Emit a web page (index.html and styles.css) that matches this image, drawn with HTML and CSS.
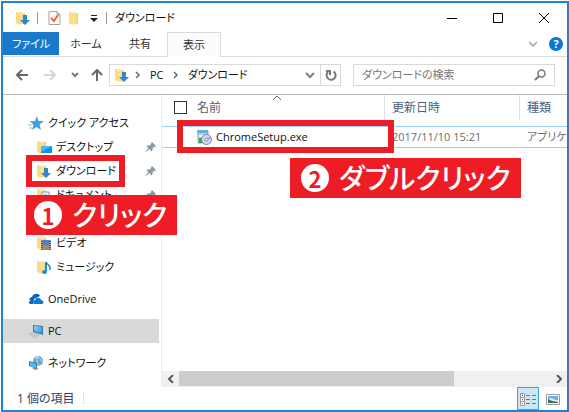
FILE: index.html
```html
<!DOCTYPE html>
<html lang="ja">
<head>
<meta charset="utf-8">
<title>ダウンロード</title>
<meta name="viewport" content="width=device-width">
<link rel="stylesheet" href="styles.css">
</head>
<body>
<svg class="defs" aria-hidden="true">
  <defs>
    <linearGradient id="gold" x1="0" x2="1"><stop offset="0" stop-color="#ffe69e"/><stop offset="1" stop-color="#f5cf69"/></linearGradient>
    <linearGradient id="sky" x1="0" y1="0" x2="1" y2="1"><stop offset="0" stop-color="#8fd8fa"/><stop offset="1" stop-color="#2093dd"/></linearGradient>
    <symbol id="folder" viewBox="0 0 16 16">
      <path d="M1 2h7v1h2v10H8v2L1 13z" fill="#ffe9a9"/>
      <path d="M5 4l5-1v11H5z" fill="url(#gold)"/>
      <path d="M1 2l4 2v11l-4-2z" fill="#fbdc86"/>
    </symbol>
    <symbol id="download" viewBox="0 0 16 16">
      <use href="#folder" width="16" height="16"/>
      <path d="M8 5h4v5h3l-5 5-5-5h3z" fill="#3385d0"/>
    </symbol>
    <symbol id="pin" viewBox="0 0 12 12">
      <path d="M7 1l4 4-1 1-1-.3L7.500 7.500 7.500 9.500 6.500 10.500 4.500 8 1 11 .5 10.700 3.500 7 1.500 5.500 2.500 4.500 4.500 4.500 6.300 3 6 2z" fill="#8c9aa5"/>
    </symbol>
  </defs>
</svg>
<div class="window">
  <header class="titlebar">
    <svg class="icon" viewBox="0 0 16 16"><use href="#download"/></svg>
    <span class="sep"></span>
    <button class="tool" aria-label="プロパティ"><svg class="icon" viewBox="0 0 16 16"><path d="M3 1.500h8l3 3v10H3z" fill="#fdfdfd" stroke="#a3a3a3"/><path d="M11 1.500v3h3" fill="none" stroke="#a3a3a3"/><path d="M5 8l3 3 4-6" fill="none" stroke="#e8663c" stroke-width="2"/></svg></button>
    <button class="tool" aria-label="新しいフォルダー"><svg class="icon" viewBox="0 0 16 16"><use href="#folder"/></svg></button>
    <button class="tool" aria-label="カスタマイズ"><svg class="small" viewBox="0 0 8 8"><path d="M1 1.500h6" stroke="#222"/><path d="M0 4h8L4 8z" fill="#222"/></svg></button>
    <span class="sep"></span>
    <h1>ダウンロード</h1>
    <div class="caption">
      <button aria-label="最小化"><svg viewBox="0 0 12 12"><path d="M1 6.500h10" stroke="#000"/></svg></button>
      <button aria-label="最大化"><svg viewBox="0 0 12 12"><path d="M1.500 1.500h9v9h-9z" fill="none" stroke="#000"/></svg></button>
      <button aria-label="閉じる"><svg viewBox="0 0 12 12"><path d="M1 1l10 10M11 1L1 11" stroke="#000"/></svg></button>
    </div>
  </header>
  <nav class="tabs">
    <button class="file">ファイル</button>
    <button>ホーム</button>
    <button>共有</button>
    <button class="current">表示</button>
    <div class="tabs-end">
      <button aria-label="リボンの展開"><svg class="small" viewBox="0 0 8 8"><path d="M0 2l4 4 4-4" fill="none" stroke="#a0a0a0" stroke-width="1.500"/></svg></button>
      <button class="help" aria-label="ヘルプ">?</button>
    </div>
  </nav>
  <div class="address-row">
    <div class="arrows">
      <button aria-label="戻る"><svg viewBox="0 0 12 12"><path d="M12 6H1M6 1L1 6l5 5" fill="none" stroke="#686868" stroke-width="2"/></svg></button>
      <button aria-label="進む"><svg viewBox="0 0 12 12"><path d="M0 6h11M6 1l5 5-5 5" fill="none" stroke="#d6d6d6" stroke-width="2"/></svg></button>
      <button class="history" aria-label="最近の場所"><svg class="small" viewBox="0 0 8 8"><path d="M1 2l3 3 3-3" fill="none" stroke="#7c7c7c" stroke-width="2"/></svg></button>
      <button aria-label="上へ"><svg viewBox="0 0 12 12"><path d="M6 12V1M1 6l5-5 5 5" fill="none" stroke="#686868" stroke-width="2"/></svg></button>
    </div>
    <div class="address">
      <svg class="icon" viewBox="0 0 16 16"><use href="#download"/></svg>
      <svg class="small" viewBox="0 0 8 8"><path d="M2 1l3 3-3 3" fill="none" stroke="#6b6b6b" stroke-width="1.500"/></svg>
      <button>PC</button>
      <svg class="small" viewBox="0 0 8 8"><path d="M2 1l3 3-3 3" fill="none" stroke="#6b6b6b" stroke-width="1.500"/></svg>
      <button>ダウンロード</button>
      <button class="drop" aria-label="以前の場所"><svg viewBox="0 0 12 12"><path d="M2 4l4 4 4-4" fill="none" stroke="#808080" stroke-width="2"/></svg></button>
      <button class="refresh" aria-label="更新"><svg viewBox="0 0 12 12"><path d="M8.500 2.500A4.500 4.500 0 1 1 3 3" fill="none" stroke="#777" stroke-width="2"/><path d="M1 1h5v5H4V3H1z" fill="#777"/></svg></button>
    </div>
    <label class="search">
      <input type="search" placeholder="ダウンロードの検索" aria-label="ダウンロードの検索">
      <svg viewBox="0 0 12 12"><circle cx="7.500" cy="4.500" r="3.500" fill="none" stroke="#777" stroke-width="1.500"/><path d="M5 7l-4 4" stroke="#777" stroke-width="2"/></svg>
    </label>
  </div>
  <main>
    <nav class="tree">
      <a href="#quick"><svg class="icon" viewBox="0 0 16 16"><path d="M9 1l1.500 5H16l-4.500 3.500L13 15l-4.500-3L4 15l1.500-5L2 6h5z" fill="#3ba1e4"/><path d="M0 10h4M1 13h3M2 7h3" stroke="#75c4f2"/></svg>クイック アクセス</a>
      <a class="child" href="#desktop"><svg class="icon" viewBox="0 0 16 16"><use href="#folder"/><path d="M5 7h11v7H5z" fill="#1593e0"/><path d="M5 7h11L5 13z" fill="#4cb9f2"/></svg>デスクトップ<svg class="pin" viewBox="0 0 12 12"><use href="#pin"/></svg></a>
      <div class="target">
        <a class="child" href="#downloads"><svg class="icon" viewBox="0 0 16 16"><use href="#download"/></svg>ダウンロード<svg class="pin" viewBox="0 0 12 12"><use href="#pin"/></svg></a>
        <div class="ring"></div>
        <div class="step"><b>1</b>クリック</div>
      </div>
      <a class="child" href="#documents"><svg class="icon" viewBox="0 0 16 16"><use href="#folder"/><path d="M6 5h7v9H6z" fill="#f4f7fa" stroke="#8497a8"/><path d="M8 8h3M8 10h3" stroke="#539bd0"/></svg>ドキュメント<svg class="pin" viewBox="0 0 12 12"><use href="#pin"/></svg></a>
      <a class="child" href="#pictures" aria-label="ピクチャ"><svg class="icon" viewBox="0 0 16 16"><use href="#folder"/></svg></a>
      <a class="child" href="#videos"><svg class="icon" viewBox="0 0 16 16"><use href="#folder"/><path d="M5 5h10v10H5z" fill="#555b61"/><path d="M7 5h6v5H7z" fill="#517bd0"/><path d="M7 10h6v5H7z" fill="#a88d45"/><path d="M6 5v10M14 5v10" stroke="#ddd" stroke-dasharray="1 1"/></svg>ビデオ</a>
      <a class="child" href="#music"><svg class="icon" viewBox="0 0 16 16"><use href="#folder"/><path d="M10 3v9" stroke="#168de0" stroke-width="2"/><ellipse cx="8.500" cy="13" rx="2.500" ry="2" fill="#168de0"/><path d="M10 3c1 3 5 3 4 8" fill="none" stroke="#168de0" stroke-width="1.500"/></svg>ミュージック</a>
      <a class="root" href="#onedrive"><svg class="icon" viewBox="0 0 16 16"><path d="M3 10C0 9 2 6 4 6c1-4 7-4 8-1L6 8l-1 5H3c-3 0-3-3 0-3z" fill="#0d61b8"/><path d="M7 13c-3 0-2-4 0-4 1-3 5-3 6 0 3 0 3 4 1 4z" fill="#0f77d4"/></svg>OneDrive</a>
      <a class="root selected" href="#pc"><svg class="icon" viewBox="0 0 16 16"><path d="M5 2l10 1v9L5 9z" fill="#427294"/><path d="M6 3l8 1v7L6 8z" fill="url(#sky)"/><path d="M0 11l5-2 7 3-5 3z" fill="#acb8c0"/><path d="M2 11l6 3M4 10l6 3" stroke="#fff" stroke-width=".5"/></svg>PC</a>
      <a class="root" href="#network"><svg class="icon" viewBox="0 0 16 16"><circle cx="10" cy="6" r="5" fill="#71a8c6"/><path d="M7 3c3-2 5 0 7 4M10 1c-2 3-1 7 1 10" fill="none" stroke="#c5e5ee"/><path d="M1 6l8 2v6l-8-3z" fill="#397eaa"/><path d="M2 7l6 2v4l-6-2z" fill="#49bdf1"/><path d="M4 13l3 2 4-1-4-2z" fill="#8597a1"/></svg>ネットワーク</a>
    </nav>
    <section class="pane">
      <table>
        <colgroup><col class="c-name"><col class="c-date"><col></colgroup>
        <thead><tr>
          <th><label><input type="checkbox">名前</label><svg class="sort" viewBox="0 0 8 4"><path d="M0 4l4-4 4 4" fill="none" stroke="#666"/></svg></th>
          <th>更新日時</th><th>種類</th>
        </tr></thead>
        <tbody>
          <tr class="spacer"><td colspan="3"></td></tr>
          <tr class="row">
            <td><span class="name"><svg class="icon" viewBox="0 0 16 16"><path d="M2 2h10v12H2z" fill="#b9cbdf" stroke="#8ea1b8"/><path d="M1 1h11v3H1z" fill="#5cb3dc"/><path d="M3 6h5v2H3z" fill="#eef5fb"/><path d="M3 9h4v5H3z" fill="#35a248"/><circle cx="10.500" cy="10.500" r="5" fill="#d3d8ee" stroke="#8085ae"/><path d="M10.500 10.500L14 7a5 5 0 0 1 1 3z" fill="#a8a5e0"/><circle cx="10.500" cy="10.500" r="1.500" fill="#fff" stroke="#777cac"/></svg>ChromeSetup.exe</span></td>
            <td>2017/11/10 15:21</td><td>アプリケー</td>
          </tr>
        </tbody>
      </table>
      <div class="ring"></div>
      <div class="step"><b>2</b>ダブルクリック</div>
      <div class="scroll">
        <button aria-label="左へ"><svg class="small" viewBox="0 0 8 8"><path d="M6 0L2 4l4 4" fill="none" stroke="#555" stroke-width="2"/></svg></button>
        <div class="track"><div class="thumb"></div></div>
        <button aria-label="右へ"><svg class="small" viewBox="0 0 8 8"><path d="M2 0l4 4-4 4" fill="none" stroke="#555" stroke-width="2"/></svg></button>
      </div>
    </section>
  </main>
  <footer>
    <span>1 個の項目</span><span class="divider"></span>
    <button class="view on" aria-label="詳細"><svg viewBox="0 0 16 14"><path d="M.5 1.500h4v4h-4zM.5 5.500h4v4h-4zM.5 9.500h4v4h-4z" fill="#fff" stroke="#999"/><path d="M2 3.500h1" stroke="#444"/><path d="M2 7.500h1" stroke="#1683e8"/><path d="M2 11.500h1" stroke="#d22"/><path d="M6 3.500h4M12 3.500h4M6 7.500h4M12 7.500h4M6 11.500h4M12 11.500h4" stroke="#777"/></svg></button>
    <button class="view" aria-label="大アイコン"><svg viewBox="0 0 16 14"><path d="M1.500 2.500h13v10h-13z" fill="#fff" stroke="#999"/><path d="M3 4h10v7H3z" fill="#6aaef2"/><path d="M3 7l4-1 3 2h3v3H3z" fill="#d5eafa"/><path d="M3 7l4 2 6 1v1H3z" fill="#3c6e5a"/></svg></button>
  </footer>
</div>
</body>
</html>
```
FILE: styles.css
```css
* { box-sizing: border-box; }

body {
  margin: 0;
  padding: 1px 0 0 1px;
  height: 100vh;
  background: #fff;
  color: #111;
  font: 11px/20px "Open Sans", "Noto Sans CJK JP", sans-serif;
  font-feature-settings: "palt";
}

button, input {
  margin: 0;
  padding: 0;
  border: 0;
  background: none;
  color: inherit;
  font: inherit;
  font-feature-settings: inherit;
}

a { color: inherit; text-decoration: none; }
svg { display: block; flex: none; width: 12px; height: 12px; }
.icon { width: 16px; height: 16px; }
.small { width: 8px; height: 8px; }
.defs { position: absolute; width: 0; height: 0; }

.window {
  display: flex;
  flex-direction: column;
  height: 100%;
  border: 2px solid #1c83d6;
  overflow: hidden;
}

/* title bar */
.titlebar {
  display: flex;
  align-items: center;
  height: 29px;
  padding-left: 12px;
}
.titlebar h1 { margin: 0; font-size: 11px; font-weight: 400; }
.sep { width: 1px; height: 12px; margin: 0 8px 0 6px; background: #999; }
.tool { margin-right: 6px; }
.tool + .sep { margin-left: 2px; }
.caption { display: flex; margin-left: auto; }
.caption button { display: grid; place-items: center; width: 46px; height: 29px; }

/* ribbon tabs */
.tabs { display: flex; height: 25px; border-bottom: 1px solid #dadbdc; color: #333; }
.tabs > button { width: 54px; }
.tabs > .file { width: 56px; height: 23px; background: #1979ca; color: #fff; }
.tabs > .current { height: 25px; border: 1px solid #dadbdc; border-bottom: 0; background: #fcfcfe; }
.tabs-end { display: flex; align-items: center; gap: 12px; margin-left: auto; padding-right: 4px; }
.help {
  width: 14px;
  height: 14px;
  border-radius: 50%;
  background: #0878d4;
  color: #fff;
  font-weight: 700;
  line-height: 14px;
}

/* navigation and address */
.address-row {
  display: flex;
  align-items: center;
  gap: 12px;
  height: 38px;
  padding: 0 12px 2px 13px;
  border-bottom: 1px solid #b8b8b8;
}
.arrows { display: flex; align-items: center; gap: 16px; width: 81px; }
.arrows .history { margin: 0 -4px 0 -1px; }
.address, .search { display: flex; align-items: center; height: 22px; border: 1px solid #d9d9d9; }
.address { flex: 226; gap: 8px; padding-left: 4px; }
.address .icon { margin-right: -4px; }
.address .drop { margin-left: auto; }
.refresh { display: grid; place-items: center; width: 20px; height: 20px; margin-left: -4px; border-left: 1px solid #d9d9d9; }
.search { flex: 184; padding: 0 8px; }
.search input { flex: 1; min-width: 0; outline: 0; appearance: none; }
.search input::placeholder { color: #757575; opacity: 1; }

/* folder tree */
main { display: flex; flex: 1; min-height: 0; }
.tree { width: 159px; padding-top: 16px; border-right: 1px solid #efefef; }
.tree a { display: flex; align-items: center; gap: 4px; height: 24px; padding-left: 25px; }
.tree .child { gap: 4px; padding-left: 33px; }
.tree .root { margin-top: 8px; }
.tree .selected { margin-right: 2px; background: #d9d9d9; }
.tree .pin { margin: 0 4px 0 auto; }

/* file list */
.pane { position: relative; display: flex; flex: 1; flex-direction: column; min-width: 0; }
table { width: 100%; table-layout: fixed; border-collapse: separate; border-spacing: 0; }
.c-name { width: 223px; }
.c-date { width: 135px; }
th, td { padding: 0 0 0 7px; overflow: hidden; text-align: left; white-space: nowrap; }
td:last-child { padding-right: 0; }
th { position: relative; height: 25px; border-right: 1px solid #e2e2e2; color: #4c607a; font-size: 12px; font-weight: 400; }
th:first-child { padding-left: 12px; }
th:last-child { border-right: 0; }
th label { display: flex; align-items: center; gap: 10px; }
th input { appearance: none; width: 13px; height: 13px; border: 1px solid #333; background: #fff; }
.sort { position: absolute; top: 1px; left: 50%; width: 8px; height: 4px; }
.spacer td { height: 6px; padding: 0; }
.row td { height: 22px; border: solid #99d1ff; border-width: 1px 0; color: #6d6d6d; }
.row td:first-child { padding-left: 34px; color: #111; }
.name { display: flex; align-items: center; gap: 4px; }

.scroll { display: flex; height: 16px; margin-top: auto; background: #f0f0f0; }
.scroll button { display: grid; place-items: center; width: 17px; }
.track { flex: 1; }
.thumb { width: 74%; height: 15px; background: #cdcdcd; }

/* step callouts over the window */
.target { position: relative; }
.ring { position: absolute; z-index: 1; border: 6px solid #ee1c25; }
.target .ring { inset: -4px 36px -4px 23px; }
.pane .ring { top: 25px; left: 15px; width: 217px; height: 33px; }
.step {
  position: absolute;
  z-index: 2;
  display: flex;
  align-items: center;
  gap: 10px;
  height: 40px;
  padding: 0 10px 0 8px;
  background: #ee1c25;
  color: #fff;
  font-size: 28px;
  font-weight: 500;
  line-height: 40px;
  white-space: nowrap;
}
.step b {
  width: 28px;
  height: 28px;
  border-radius: 50%;
  background: #fff;
  color: #ee1c25;
  font-family: "Noto Sans CJK JP", sans-serif;
  font-size: 22px;
  line-height: 28px;
  text-align: center;
}
.target .step { top: 36px; left: 23px; }
.pane .step { top: 63px; left: 128px; padding-left: 11px; }

/* status bar */
footer { display: flex; align-items: center; height: 23px; padding-left: 14px; color: #33415f; font-size: 12px; }
.divider { width: 1px; height: 12px; margin-left: 8px; background: #e5e5e5; }
.view { display: grid; place-items: center; width: 22px; height: 23px; margin-right: 3px; }
.view svg { width: 16px; height: 14px; }
.view.on { margin-left: auto; border: 1px solid #3aa5d8; background: #cce8f6; }
```
